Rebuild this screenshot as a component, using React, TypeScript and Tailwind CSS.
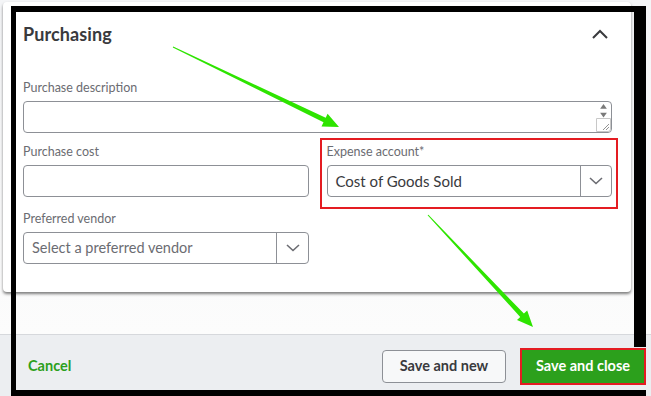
import React from 'react';

type Pt = [number, number];

// tapered annotation arrow, points computed from tail/tip
const arrowPoints = (tail: Pt, tip: Pt, w0: number, w1: number, hl: number, hw: number) => {
  const dx = tip[0] - tail[0];
  const dy = tip[1] - tail[1];
  const len = Math.hypot(dx, dy);
  const ux = dx / len;
  const uy = dy / len;
  const nx = -uy;
  const ny = ux;
  const sx = tip[0] - ux * hl;
  const sy = tip[1] - uy * hl;
  const pts: Pt[] = [
    [tail[0] + (nx * w0) / 2, tail[1] + (ny * w0) / 2],
    [sx + (nx * w1) / 2, sy + (ny * w1) / 2],
    [sx + nx * hw, sy + ny * hw],
    tip,
    [sx - nx * hw, sy - ny * hw],
    [sx - (nx * w1) / 2, sy - (ny * w1) / 2],
    [tail[0] - (nx * w0) / 2, tail[1] - (ny * w0) / 2],
  ];
  return pts.map((p) => `${p[0].toFixed(1)},${p[1].toFixed(1)}`).join(' ');
};

const ChevronDown: React.FC = () => (
  <svg width="14" height="8" viewBox="0 0 14 8" fill="none">
    <polyline points="1,1 7,6.5 13,1" stroke="#6b6c72" strokeWidth="1.6" />
  </svg>
);

const Label: React.FC<{ children: React.ReactNode }> = ({ children }) => (
  <div className="text-[12.5px] leading-[16px] text-[#6b6c72]">{children}</div>
);

const App: React.FC = () => {
  return (
    <div className="relative w-[651px] h-[396px] overflow-hidden bg-[#f6f7f8] flex flex-col font-['Lato','Open_Sans',sans-serif] text-[#393a3d]">
      {/* Purchasing card */}
      <div className="h-[334px] flex flex-col bg-gradient-to-b from-[#f4f5f7] to-[#fcfcfc]">
        <div className="ml-[3px] mt-[2px] w-[628px] h-[290px] bg-white rounded-[4px] shadow-[0_2px_3px_rgba(0,0,0,0.5)] pl-[20px] pr-[19px] pt-[21px]">
          <div className="flex items-center justify-between h-[22px]">
            <div className="text-[18px] font-bold tracking-[0.1px]">Purchasing</div>
            <svg width="16" height="10" viewBox="0 0 16 10" fill="none" className="mr-[4px]">
              <polyline points="1,9 8,2 15,9" stroke="#393a3d" strokeWidth="2" />
            </svg>
          </div>

          <div className="mt-[35px]">
            <Label>Purchase description</Label>
            <div className="mt-[5px] h-[32px] border border-[#8d9096] rounded-[4px] flex">
              <div className="flex-1" />
              <div className="w-[15px] flex flex-col items-center">
                <svg width="9" height="16" viewBox="0 0 9 16" className="mt-[1px]">
                  <polygon points="4.5,1 8,6 1,6" fill="#7a7a7a" />
                  <polygon points="1,10 8,10 4.5,15" fill="#7a7a7a" />
                </svg>
                <div className="mt-auto w-[15px] h-[14px] border border-[#c8c8c8] rounded-br-[3px] bg-white flex items-end justify-end">
                  <svg width="8" height="8" viewBox="0 0 8 8">
                    <line x1="1" y1="7" x2="7" y2="1" stroke="#777" strokeWidth="0.8" />
                    <line x1="4" y1="7" x2="7" y2="4" stroke="#777" strokeWidth="0.8" />
                  </svg>
                </div>
              </div>
            </div>
          </div>

          <div className="mt-[11px] grid grid-cols-2 gap-[18px]">
            <div>
              <Label>Purchase cost</Label>
              <div className="mt-[5px] h-[32px] border border-[#8d9096] rounded-[4px]" />
            </div>
            <div>
              <Label>Expense account*</Label>
              <div className="mt-[5px] h-[32px] border border-[#8d9096] rounded-[4px] flex items-center">
                <div className="flex-1 pl-[8px] text-[15px]">Cost of Goods Sold</div>
                <div className="w-[31px] h-full border-l border-[#8d9096] flex items-center justify-center">
                  <ChevronDown />
                </div>
              </div>
            </div>
          </div>

          <div className="mt-[14px] w-[286px]">
            <Label>Preferred vendor</Label>
            <div className="mt-[5px] h-[32px] border border-[#8d9096] rounded-[4px] flex items-center">
              <div className="flex-1 pl-[8px] text-[14.5px] text-[#6b6c72]">Select a preferred vendor</div>
              <div className="w-[32px] h-full border-l border-[#8d9096] flex items-center justify-center">
                <ChevronDown />
              </div>
            </div>
          </div>
        </div>
      </div>

      {/* Footer */}
      <div className="h-[62px] border-t border-[#d6d8dc] bg-[#eceef1] flex items-center justify-between pl-[28px] pr-[5px] pt-[1px]">
        <div className="text-[14.5px] font-bold text-[#2ca01c]">Cancel</div>
        <div className="flex items-center gap-[14px]">
          <button className="h-[33px] w-[124px] border border-[#8d9096] rounded-[4px] bg-[#f7f8f9] text-[14.5px] font-bold text-[#393a3d]">
            Save and new
          </button>
          <button className="h-[37px] w-[126px] border-2 border-[#e41c22] bg-[#2ca01c] text-[14.5px] font-bold text-white">
            Save and close
          </button>
        </div>
      </div>

      {/* Annotation layer: frame, highlight box, arrows */}
      <svg className="absolute inset-0 pointer-events-none" width="651" height="396" viewBox="0 0 651 396">
        <rect x="11" y="6" width="635" height="6" fill="#000" />
        <rect x="11" y="6" width="5" height="390" fill="#000" />
        <rect x="11" y="390" width="635" height="6" fill="#000" />
        <rect x="634" y="6" width="12" height="341" fill="#000" />
        <rect x="321" y="139" width="296" height="69" fill="none" stroke="#e41c22" strokeWidth="2" />
        <polygon points={arrowPoints([173, 47], [339, 127], 1, 5, 16, 7)} fill="#2ee400" />
        <polygon points={arrowPoints([428, 215], [533, 327], 1, 5, 16, 7)} fill="#2ee400" />
      </svg>
    </div>
  );
};

export default App;
